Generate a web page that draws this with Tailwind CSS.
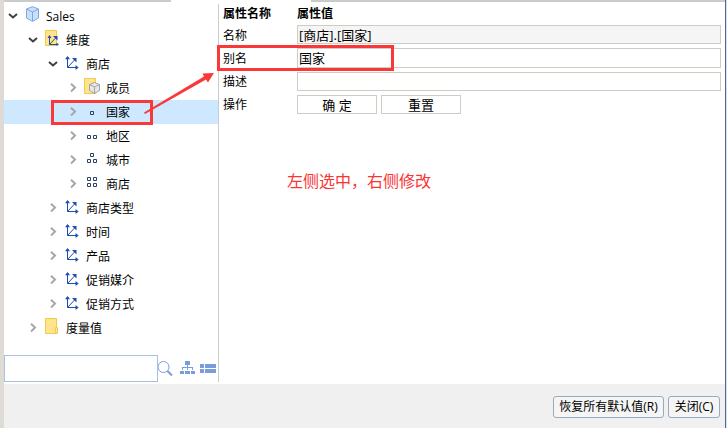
<!DOCTYPE html>
<html lang="zh-CN">
<head>
  <meta charset="UTF-8">
  <meta name="viewport" content="width=device-width, initial-scale=1.0">
  <title>Sales - 属性</title>
  <script src="https://cdn.jsdelivr.net/npm/@tailwindcss/browser@4"></script>
</head>
<body class="relative flex min-h-screen bg-white text-black text-[12px] leading-4 font-['Open_Sans','Noto_Sans_CJK_SC',sans-serif]">

  <!-- Iconos compartidos -->
  <svg class="hidden">
    <symbol id="down" viewBox="0 0 10 10"><path d="M1 3l4 3.500L9 3" fill="none" stroke="#404040" stroke-width="2"/></symbol>
    <symbol id="right" viewBox="0 0 10 10"><path d="M3 .8L7 4.600 3 8.500" fill="none" stroke="#a6a6a6" stroke-width="2"/></symbol>
    <symbol id="cube" viewBox="0 0 16 16">
      <path d="M8.500.6L14.500 3v9L8.500 15.400 2.500 12V3z" fill="#c9dffa" stroke="#7ba7e4"/>
      <path d="M2.500 3l6 3 6-3M8.500 6v9" fill="none" stroke="#7ba7e4"/>
    </symbol>
    <symbol id="axes" viewBox="0 0 16 16">
      <path d="M3.500 1v10.500H14M3.500 11.500L11 3.500" fill="none" stroke="#1f4fae"/>
      <path d="M1 3.200L3.500 0 6 3.200zM11.500 9l3.200 2.500-3.200 2.500zM8 2h4.500v4.500z" fill="#1f4fae"/>
    </symbol>
    <symbol id="folder" viewBox="0 0 16 16">
      <path d="M1.500.5h11v9h1v6h-12z" fill="#ffe48c" stroke="#eccb50"/>
      <path d="M11.500 15V9.500h1" fill="none" stroke="#eccb50"/>
    </symbol>
    <symbol id="dim" viewBox="0 0 16 16">
      <path d="M1.500.5h11v15h-11z" fill="#ffe48c" stroke="#eccb50"/>
      <path d="M5.500 6v8.500H14M5.500 14.500L12 7.500" fill="none" stroke="#1f4fae"/>
      <path d="M3.500 8l2-3 2 3zM12.500 12.500l2.500 2-2.500 1.500zM9 6h4.500v4.500z" fill="#1f4fae"/>
    </symbol>
    <symbol id="members" viewBox="0 0 16 16">
      <path d="M.5.5h11v15H.5z" fill="#ffe48c" stroke="#eccb50"/>
      <path d="M10.500 4.500l5 2v6l-5 3-5-3v-6z" fill="#e6e6e6" stroke="#a3a3a3"/>
      <path d="M5.500 6.500l5 2.500 5-2.500M10.500 9v6.500" fill="none" stroke="#a3a3a3"/>
    </symbol>
    <symbol id="lv1" viewBox="0 0 16 16"><path d="M6.500 7.500h3v3h-3z" fill="none" stroke="#2c4264"/></symbol>
    <symbol id="lv2" viewBox="0 0 16 16"><path d="M3.500 7.500h3v3h-3zM9.500 7.500h3v3h-3z" fill="none" stroke="#2c4264"/></symbol>
    <symbol id="lv3" viewBox="0 0 16 16"><path d="M6.500 1.500h3v3h-3zM3.500 7.500h3v3h-3zM9.500 7.500h3v3h-3z" fill="none" stroke="#2c4264"/></symbol>
    <symbol id="lv4" viewBox="0 0 16 16"><path d="M3.500 1.500h3v3h-3zM9.500 1.500h3v3h-3zM3.500 7.500h3v3h-3zM9.500 7.500h3v3h-3z" fill="none" stroke="#2c4264"/></symbol>
  </svg>

  <div class="w-1 shrink-0 bg-[#dedad5]"></div>

  <div class="flex min-w-0 flex-1 flex-col border-r border-[#52688a]">
    <div class="flex h-0.5">
      <div class="w-[167px] bg-[#cbcbcb]"></div>
      <div class="w-[140px]"></div>
      <div class="flex-1 bg-[#cbcbcb]"></div>
    </div>

    <div class="flex flex-1 py-0.5">
      <!-- Árbol -->
      <aside class="flex w-[215px] shrink-0 flex-col border-r border-[#cbcbcb]">
        <ul role="tree" class="flex-1">
          <li role="treeitem" class="flex h-6 items-center gap-1.5 pl-1"><button aria-label="折叠"><svg class="size-2.5"><use href="#down"/></svg></button><svg class="mb-1 size-4"><use href="#cube"/></svg><span class="pt-0.5">Sales</span></li>
          <li role="treeitem" class="flex h-6 items-center gap-1.5 pl-6"><button aria-label="折叠"><svg class="size-2.5"><use href="#down"/></svg></button><svg class="mb-1 size-4"><use href="#dim"/></svg><span class="pt-0.5">维度</span></li>
          <li role="treeitem" class="flex h-6 items-center gap-1.5 pl-11"><button aria-label="折叠"><svg class="size-2.5"><use href="#down"/></svg></button><svg class="size-4"><use href="#axes"/></svg><span class="pt-0.5">商店</span></li>
          <li role="treeitem" class="flex h-6 items-center gap-1.5 pl-16"><button aria-label="展开"><svg class="size-2.5"><use href="#right"/></svg></button><svg class="mb-1 size-4"><use href="#members"/></svg><span class="pt-0.5">成员</span></li>
          <li role="treeitem" aria-selected="true" class="flex h-6 items-center gap-1.5 bg-[#cde8ff] pl-16"><button aria-label="展开"><svg class="size-2.5"><use href="#right"/></svg></button><svg class="size-4"><use href="#lv1"/></svg><span class="pt-0.5">国家</span></li>
          <li role="treeitem" class="flex h-6 items-center gap-1.5 pl-16"><button aria-label="展开"><svg class="size-2.5"><use href="#right"/></svg></button><svg class="size-4"><use href="#lv2"/></svg><span class="pt-0.5">地区</span></li>
          <li role="treeitem" class="flex h-6 items-center gap-1.5 pl-16"><button aria-label="展开"><svg class="size-2.5"><use href="#right"/></svg></button><svg class="size-4"><use href="#lv3"/></svg><span class="pt-0.5">城市</span></li>
          <li role="treeitem" class="flex h-6 items-center gap-1.5 pl-16"><button aria-label="展开"><svg class="size-2.5"><use href="#right"/></svg></button><svg class="size-4"><use href="#lv4"/></svg><span class="pt-0.5">商店</span></li>
          <li role="treeitem" class="flex h-6 items-center gap-1.5 pl-11"><button aria-label="展开"><svg class="size-2.5"><use href="#right"/></svg></button><svg class="size-4"><use href="#axes"/></svg><span class="pt-0.5">商店类型</span></li>
          <li role="treeitem" class="flex h-6 items-center gap-1.5 pl-11"><button aria-label="展开"><svg class="size-2.5"><use href="#right"/></svg></button><svg class="size-4"><use href="#axes"/></svg><span class="pt-0.5">时间</span></li>
          <li role="treeitem" class="flex h-6 items-center gap-1.5 pl-11"><button aria-label="展开"><svg class="size-2.5"><use href="#right"/></svg></button><svg class="size-4"><use href="#axes"/></svg><span class="pt-0.5">产品</span></li>
          <li role="treeitem" class="flex h-6 items-center gap-1.5 pl-11"><button aria-label="展开"><svg class="size-2.5"><use href="#right"/></svg></button><svg class="size-4"><use href="#axes"/></svg><span class="pt-0.5">促销媒介</span></li>
          <li role="treeitem" class="flex h-6 items-center gap-1.5 pl-11"><button aria-label="展开"><svg class="size-2.5"><use href="#right"/></svg></button><svg class="size-4"><use href="#axes"/></svg><span class="pt-0.5">促销方式</span></li>
          <li role="treeitem" class="flex h-6 items-center gap-1.5 pl-6"><button aria-label="展开"><svg class="size-2.5"><use href="#right"/></svg></button><svg class="mb-1 size-4"><use href="#folder"/></svg><span class="pt-0.5">度量值</span></li>
        </ul>
        <div class="flex items-center pr-0.5">
          <input type="text" aria-label="搜索" class="h-[27px] min-w-0 flex-1 border border-[#a9c0e2] px-1 outline-none">
          <button aria-label="搜索">
            <svg class="h-4 w-[15px]" viewBox="0 0 15 16" fill="none"><circle cx="5.500" cy="6" r="5.500" stroke="#7a9cdc"/><path d="M9.500 10l4.500 4.500" stroke="#7a9cdc" stroke-width="2"/></svg>
          </button>
          <button aria-label="层次" class="ml-[7px]">
            <svg class="h-4 w-[15px]" viewBox="0 0 15 16" fill="#7a9cdc"><path d="M5 0h5v4H5zM7 4h1v2h5v3h-1V7H8v2H7V7H3v2H2V6h5zM0 10h4v3H0zM5 10h5v3H5zM11 10h4v3h-4z"/></svg>
          </button>
          <button aria-label="列表" class="ml-[5px]">
            <svg class="h-4 w-4" viewBox="0 0 16 16" fill="#7a9cdc"><path d="M0 3h4v4H0zM5 3h11v4H5zM0 8h4v4H0zM5 8h11v4H5z"/></svg>
          </button>
        </div>
      </aside>

      <!-- Propiedades -->
      <main class="min-w-0 flex-1 px-1">
        <form class="grid grid-cols-[74px_1fr] items-center gap-y-1">
          <b class="h-[17px] leading-5">属性名称</b>
          <b class="h-[17px] leading-5">属性值</b>
          <label for="nombre" class="pt-0.5">名称</label>
          <input id="nombre" type="text" value="[商店].[国家]" readonly class="h-[19px] w-full border border-[#cfccc6] bg-[#f5f5f5] px-px text-[13px] outline-none">
          <label for="alias" class="pt-0.5">别名</label>
          <input id="alias" type="text" value="国家" class="h-5 w-full border border-[#cfccc6] px-px pb-0.5 text-[13px] outline-none">
          <label for="descripcion">描述</label>
          <input id="descripcion" type="text" class="h-[19px] w-full border border-[#cfccc6] px-px text-[13px] outline-none">
          <span>操作</span>
          <div class="flex gap-1">
            <button type="button" class="h-[19px] w-20 border border-[#cfccc6] text-[13px]">确 定</button>
            <button type="button" class="h-[19px] w-20 border border-[#cfccc6] text-[13px]">重置</button>
          </div>
        </form>
        <p class="mt-14 pl-16 pt-[3px] text-[16px] leading-4 text-[#fb3434]">左侧选中，右侧修改</p>
      </main>
    </div>

    <footer class="flex h-11 items-start justify-end gap-1 bg-[#f0f0f0] pt-3 pr-[5px]">
      <button class="h-[22px] w-[111px] rounded-[3px] border border-[#9aaabd] bg-[#f5f5f5] whitespace-nowrap">恢复所有默认值(R)</button>
      <button class="h-[22px] w-[52px] rounded-[3px] border border-[#9aaabd] bg-[#f5f5f5] whitespace-nowrap">关闭(C)</button>
    </footer>
  </div>
  <div class="w-px shrink-0 bg-[#d3e3f5]"></div>

  <!-- Marcas rojas -->
  <div class="pointer-events-none absolute top-[100px] left-[51px] h-[25px] w-[102px] border-3 border-[#fb3838]"></div>
  <div class="pointer-events-none absolute top-[45px] left-[217px] h-[26px] w-[177px] border-3 border-[#fb3838]"></div>
  <svg class="pointer-events-none absolute top-[70px] left-[140px] h-[48px] w-[80px]" viewBox="0 0 80 48" fill="#fb3838">
    <path d="M4 42.500L64 6.500 62.500 3.500 74 3 68 12.500 66 9.500 5 44z"/>
  </svg>
</body>
</html>
